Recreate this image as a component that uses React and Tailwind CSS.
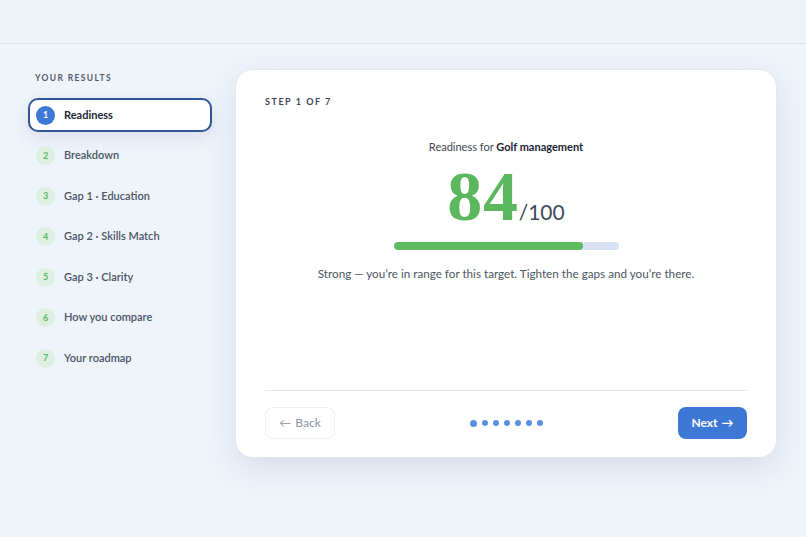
import React from 'react';

const steps = [
  'Readiness',
  'Breakdown',
  'Gap 1 · Education',
  'Gap 2 · Skills Match',
  'Gap 3 · Clarity',
  'How you compare',
  'Your roadmap',
];

const App = () => {
  const active = 0;
  const score = 84;

  return (
    <div className="min-h-screen bg-[#eff3fa] text-[#2d3a4e] font-['Lato','Liberation_Sans',sans-serif]">
      <div className="h-[44px] border-b border-[#dfe5ef] bg-[#eef2f9]" />

      <div className="flex gap-[23px] pl-[28px] pr-[29px] pt-[25px]">
        {/* sidebar */}
        <aside className="w-[184px] shrink-0">
          <div className="pl-[7px] pt-[3px] text-[8.5px] font-bold tracking-[0.16em] text-[#4f5b6d]">
            YOUR RESULTS
          </div>
          <ul className="mt-[13px] flex flex-col gap-[6px]">
            {steps.map((s, i) =>
              i === active ? (
                <li
                  key={s}
                  className="flex h-[34.5px] items-center gap-[9px] rounded-[10px] border-2 border-[#2f5597] bg-white pl-[6px] shadow-[0_6px_16px_rgba(60,90,150,0.12)]"
                >
                  <span className="flex h-[19px] w-[19px] items-center justify-center rounded-full bg-[#3e78d6] text-[9px] font-bold text-white">
                    {i + 1}
                  </span>
                  <span className="text-[11px] font-bold text-[#1c2536]">{s}</span>
                </li>
              ) : (
                <li key={s} className="flex h-[34.5px] items-center gap-[9px] pl-[8px]">
                  <span className="flex h-[19px] w-[19px] items-center justify-center rounded-full bg-[#dcefe0] text-[9px] font-bold text-[#5bb566]">
                    {i + 1}
                  </span>
                  <span className="text-[11px] font-semibold text-[#4a5568]">{s}</span>
                </li>
              )
            )}
          </ul>
        </aside>

        {/* card */}
        <main className="flex h-[389px] flex-1 flex-col rounded-[18px] border border-[#e3e8f0] bg-white px-[29px] pt-[25px] pb-[18px] shadow-[0_10px_30px_rgba(70,90,140,0.14)]">
          <div className="text-[9px] font-bold tracking-[0.17em] text-[#3d4656]">STEP 1 OF 7</div>

          <div className="mt-[30px] flex flex-col items-center">
            <div className="text-[11px] leading-[16px] text-[#3d4656]">
              Readiness for <span className="font-bold text-[#1c2536]">Golf management</span>
            </div>
            <div className="mt-[7px] flex items-baseline">
              <span className="font-['Liberation_Serif',serif] text-[70px] font-bold leading-[70px] tracking-[0.01em] text-[#5cb85f]">
                {score}
              </span>
              <span className="text-[21px] leading-none text-[#3d4a5c]">/100</span>
            </div>
            <div className="mt-[10px] h-[8px] w-[225px] overflow-hidden rounded-full bg-[#d9e2f2]">
              <div className="h-full rounded-full bg-[#5cba5f]" style={{ width: `${score}%` }} />
            </div>
            <p className="mt-[14px] text-[11.7px] leading-[18px] text-[#4b5563]">
              Strong — you’re in range for this target. Tighten the gaps and you’re there.
            </p>
          </div>

          <div className="mt-auto border-t border-[#e3e7ee]" />
          <div className="mt-[16px] flex items-center justify-between">
            <button className="flex h-[32px] w-[70px] items-center justify-center gap-[4px] rounded-[8px] border border-[#eceff4] text-[12px] text-[#8a94a6]">
              <span className="text-[12px]">←</span> Back
            </button>
            <div className="flex items-center gap-[5px]">
              {steps.map((s, i) => (
                <span
                  key={s}
                  className={i === active ? 'h-[7px] w-[7px] rounded-full bg-[#5b8fe0]' : 'h-[6px] w-[6px] rounded-full bg-[#5b8fe0]'}
                />
              ))}
            </div>
            <button className="flex h-[32px] w-[69px] items-center justify-center gap-[4px] rounded-[8px] bg-[#3e78d6] text-[12px] font-bold text-white">
              Next <span>→</span>
            </button>
          </div>
        </main>
      </div>
    </div>
  );
};

export default App;
